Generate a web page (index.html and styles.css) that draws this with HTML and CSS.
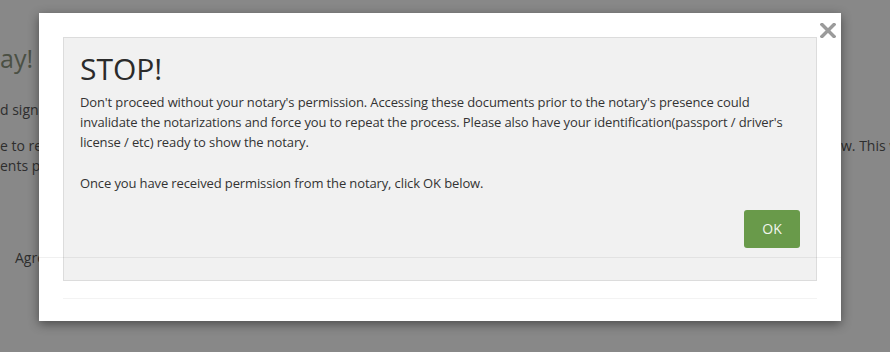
FILE: index.html
```html
<!DOCTYPE html>
<html lang="en">
<head>
  <meta charset="UTF-8" />
  <meta name="viewport" content="width=device-width, initial-scale=1.0"/>
  <title>Notary Session</title>
  <link rel="stylesheet" href="styles.css">
</head>
<body>

  <div class="page">
    <h1 class="greeting">ay!</h1>
    <p class="line">d sign</p>
    <div class="row">
      <p class="line">e to re<br>ents pr</p>
      <p class="line tail">w. This w</p>
    </div>
    <p class="line agree">Agree</p>
  </div>

  <div class="backdrop">
    <div class="modal">
      <button type="button" class="close-btn" aria-label="Close">
        <svg width="16" height="15" viewBox="0 0 16 15">
          <path d="M2 1.5 L14 13.5 M14 1.5 L2 13.5" stroke="#9b9b9b" stroke-width="3.4" stroke-linecap="square" fill="none"/>
        </svg>
      </button>

      <div class="panel">
        <h2>STOP!</h2>
        <p>Don't proceed without your notary's permission. Accessing these documents prior to the notary's presence could invalidate the notarizations and force you to repeat the process. Please also have your identification(passport / driver's license / etc) ready to show the notary.</p>
        <p>Once you have received permission from the notary, click OK below.</p>
        <div class="actions">
          <button type="button" class="ok-btn">OK</button>
        </div>
      </div>

      <div class="modal-footer"></div>
      <div class="ghost-line"></div>
    </div>
  </div>

</body>
</html>
```

FILE: styles.css
```css
:root {
  --overlay: #888888;
  --panel-bg: #f1f1f1;
  --panel-border: #dcdcdc;
  --text-dark: #333333;
  --green: #699a4a;
}

* {
  box-sizing: border-box;
  margin: 0;
  padding: 0;
}

body {
  font-family: 'Open Sans', 'Liberation Sans', sans-serif;
  background-color: var(--overlay);
  color: #2e2e2e;
  width: 890px;
  height: 352px;
  overflow: hidden;
}

/* page behind the dialog */
.page {
  padding-top: 42px;
}

.greeting {
  font-size: 25px;
  font-weight: normal;
  line-height: 32px;
  color: #4b5044;
  margin-bottom: 26px;
}

.line {
  font-size: 14px;
  line-height: 20px;
}

.row {
  display: flex;
  justify-content: space-between;
  margin-top: 16px;
}

.tail {
  width: 49px;
  white-space: nowrap;
  overflow: hidden;
}

.agree {
  padding-left: 15px;
  margin-top: 72px;
}

/* dialog */
.backdrop {
  position: fixed;
  inset: 0;
  padding: 13px 0 0 39px;
}

.modal {
  position: relative;
  width: 802px;
  height: 308px;
  background-color: #fff;
  padding: 24px 24px 0;
  box-shadow: 0 3px 10px rgba(0, 0, 0, 0.45);
}

.close-btn {
  position: absolute;
  top: 10px;
  right: 5px;
  width: 16px;
  height: 15px;
  border: none;
  background: none;
  cursor: pointer;
  display: flex;
}

.panel {
  height: 244px;
  background-color: var(--panel-bg);
  border: 1px solid var(--panel-border);
  padding: 14px 16px 32px;
  color: var(--text-dark);
  display: flex;
  flex-direction: column;
}

.panel h2 {
  font-size: 30px;
  font-weight: normal;
  line-height: 33px;
  color: #2b2b2b;
  margin-bottom: 7px;
}

.panel p {
  font-size: 13px;
  letter-spacing: -0.12px;
  line-height: 20px;
  margin-bottom: 21px;
}

.panel p:last-of-type {
  margin-bottom: 0;
}

.actions {
  display: flex;
  justify-content: flex-end;
  margin-top: auto;
}

.ok-btn {
  font-family: inherit;
  font-size: 14px;
  line-height: 20px;
  padding: 9px 18px;
  width: 56px;
  height: 38px;
  border: none;
  border-radius: 3px;
  background-color: var(--green);
  color: #f2f6ee;
  cursor: pointer;
}

.modal-footer {
  margin-top: 17px;
  border-top: 1px solid #f3f3f3;
}

.ghost-line {
  position: absolute;
  left: 0;
  right: 0;
  top: 244px;
  height: 1px;
  background-color: rgba(0, 0, 0, 0.06);
}
```
